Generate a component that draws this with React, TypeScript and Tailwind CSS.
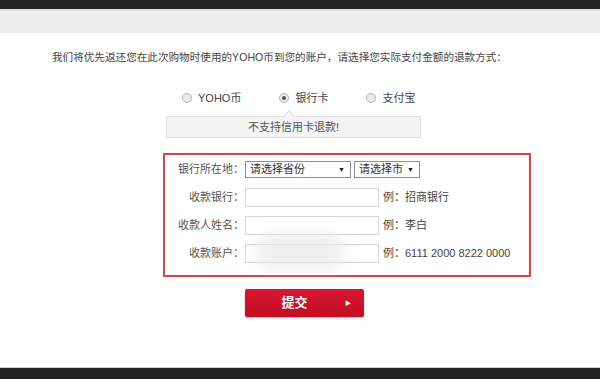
const font = { fontFamily: '"Liberation Sans", "Noto Sans CJK SC", sans-serif' };

const rows = [
  { label: "收款银行：", hint: "例：招商银行" },
  { label: "收款人姓名：", hint: "例：李白" },
  { label: "收款账户：", hint: "例：6111 2000 8222 0000" },
];

function Radio({ checked, label, className }: { checked?: boolean; label: string; className?: string }) {
  return (
    <div className={`flex items-center ${className ?? ""}`}>
      <span className="flex h-[10px] w-[10px] items-center justify-center rounded-full border border-[#b5b5b5] bg-[#e9e9e9]">
        {checked && <span className="h-[4px] w-[4px] rounded-full bg-[#555]" />}
      </span>
      <span className="ml-[6px] text-[11px] text-[#444]">{label}</span>
    </div>
  );
}

function FakeSelect({ text, width }: { text: string; width: string }) {
  return (
    <div className={`flex h-[17px] items-center justify-between border border-[#8f8f8f] bg-white pl-[4px] pr-[5px] ${width}`}>
      <span className="text-[11px] leading-none text-[#333]">{text}</span>
      <span className="text-[7px] leading-none text-[#222]">▼</span>
    </div>
  );
}

export default function App() {
  return (
    <div className="flex h-[379px] w-[600px] flex-col bg-white" style={font}>
      <div className="h-[9px] bg-[#222]" />
      <div className="h-[2px] bg-[#dcdcdc]" />
      <div className="h-[22px] bg-[#ededed]" />

      <p className="mt-[16px] pl-[52px] text-[10.6px] leading-[16px] text-[#444]">
        我们将优先返还您在此次购物时使用的YOHO币到您的账户，请选择您实际支付金额的退款方式：
      </p>

      <div className="mt-[25px] flex h-[16px] items-center">
        <Radio label="YOHO币" className="ml-[182px]" />
        <Radio checked label="银行卡" className="ml-[38px]" />
        <Radio label="支付宝" className="ml-[38px]" />
      </div>

      <div className="relative mt-[10px] ml-[166px] flex h-[22px] w-[255px] items-center justify-center border border-[#dedede] bg-[#f4f4f4] text-[11px] text-[#555]">
        <span className="absolute -top-[5px] left-[118px] h-[8px] w-[8px] rotate-45 border-l border-t border-[#dedede] bg-[#f4f4f4]" />
        不支持信用卡退款!
      </div>

      <div className="relative mt-[15px] ml-[163px] w-[368px] border-2 border-[#d9434c] pb-[8px]">
        <div className="flex h-[28px] items-center">
          <span className="w-[79px] text-right text-[11px] text-[#555]">银行所在地：</span>
          <div className="ml-[1px] flex gap-[3px]">
            <FakeSelect text="请选择省份" width="w-[106px]" />
            <FakeSelect text="请选择市" width="w-[66px]" />
          </div>
        </div>
        {rows.map((r) => (
          <div key={r.label} className="flex h-[28px] items-center">
            <span className="w-[79px] text-right text-[11px] text-[#555]">{r.label}</span>
            <div className="ml-[1px] h-[19px] w-[134px] border border-[#d6d6d6] bg-white" />
            <span className="ml-[4px] text-[11px] text-[#444]">{r.hint}</span>
          </div>
        ))}
        <div className="pointer-events-none absolute left-[90px] top-[78px] h-[36px] w-[90px] rounded-full bg-[#e6e6e6] opacity-60 blur-[6px]" />
      </div>

      <button
        type="button"
        className="relative mt-[12px] ml-[245px] flex h-[28px] w-[119px] items-center justify-center rounded-[2px] bg-gradient-to-b from-[#d91632] to-[#c20d26] pr-[20px] text-[13px] font-bold text-white shadow-[0_1px_2px_rgba(0,0,0,0.3)]"
      >
        提交
        <span className="absolute right-[13px] top-1/2 -translate-y-1/2 text-[6px]">▶</span>
      </button>

      <div className="flex-1" />
      <div className="h-px bg-[#d0d0d0]" />
      <div className="h-[11px] bg-[#222]" />
    </div>
  );
}
